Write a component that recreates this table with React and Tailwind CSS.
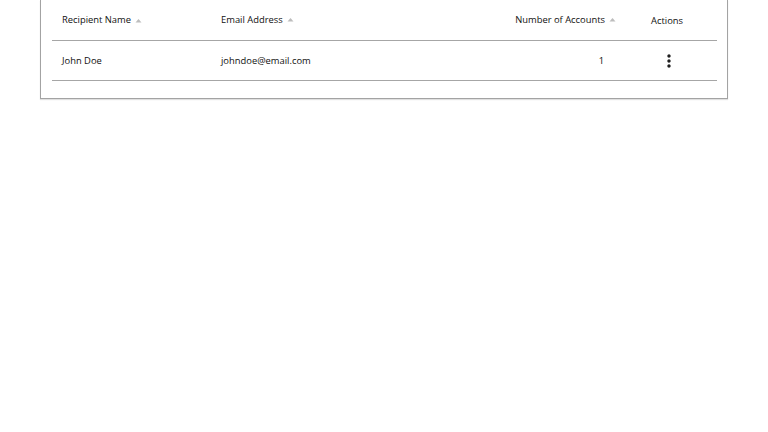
import React from 'react';

const rows = [
    { name: 'John Doe', email: 'johndoe@email.com', accounts: 1 },
];

const SortArrow = () => (
    <svg width="7" height="5" viewBox="0 0 7 5" className="ml-[4px] text-[#bdbdbd]">
        <path d="M0.5 4.5 L3.5 1 L6.5 4.5 Z" fill="currentColor" />
    </svg>
);

const MoreVert = () => (
    <svg width="20" height="20" viewBox="0 0 24 24" className="text-[#1f1f1f]">
        <path
            fill="currentColor"
            d="M12 8c1.1 0 2-.9 2-2s-.9-2-2-2-2 .9-2 2 .9 2 2 2zm0 2c-1.1 0-2 .9-2 2s.9 2 2 2 2-.9 2-2-.9-2-2-2zm0 6c-1.1 0-2 .9-2 2s.9 2 2 2 2-.9 2-2-.9-2-2-2z"
        />
    </svg>
);

const App = () => {
    return (
        <div className="min-h-screen bg-white px-[40px] font-['Open_Sans',sans-serif] text-[9.4px] text-[#111111]">
            <div className="border border-t-0 border-[#a3a3a3] shadow-[0_1px_1px_rgba(0,0,0,0.12)] pl-[11px] pr-[10px] pb-[17px]">
                {/* Header */}
                <div className="grid grid-cols-[159px_1fr_76px] h-[41px] border-b border-[#a6a6a6] whitespace-nowrap">
                    <div className="flex items-center pl-[10px]">
                        Recipient Name
                        <SortArrow />
                    </div>
                    <div className="flex items-center justify-between">
                        <div className="flex items-center pl-[10px]">
                            Email Address
                            <SortArrow />
                        </div>
                        <div className="flex items-center pr-[25px]">
                            Number of Accounts
                            <SortArrow />
                        </div>
                    </div>
                    <div className="flex items-center pl-[10px] pt-[2px]">Actions</div>
                </div>

                {/* Rows */}
                {rows.map((row) => (
                    <div
                        key={row.email}
                        className="grid grid-cols-[159px_1fr_76px] h-[40px] border-b border-[#a6a6a6] whitespace-nowrap"
                    >
                        <div className="flex items-center pl-[10px] pt-[2px]">{row.name}</div>
                        <div className="flex items-center justify-between pt-[2px]">
                            <span className="pl-[10px]">{row.email}</span>
                            <span className="pr-[37px]">{row.accounts}</span>
                        </div>
                        <div className="flex items-center pl-[18px]">
                            <MoreVert />
                        </div>
                    </div>
                ))}
            </div>
        </div>
    );
};

export default App;
